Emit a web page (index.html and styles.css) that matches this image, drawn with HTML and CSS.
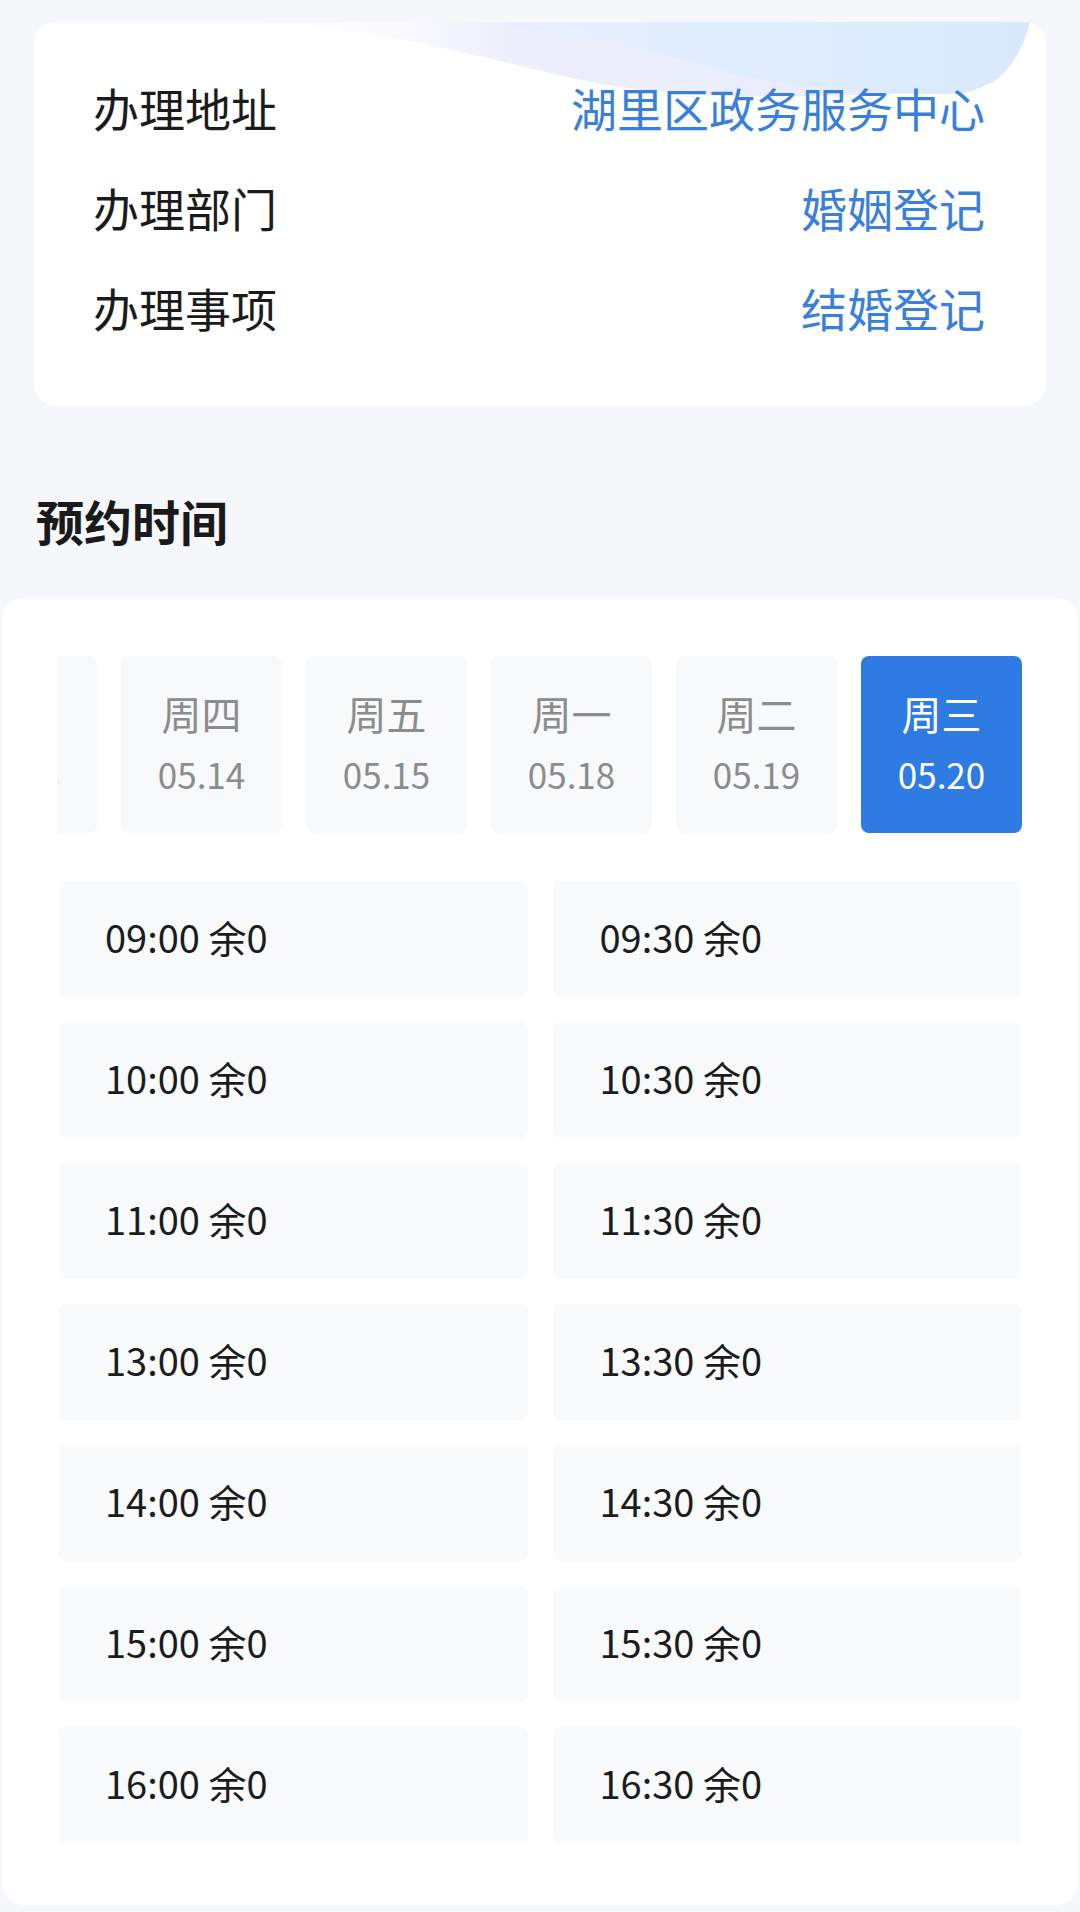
FILE: index.html
```html
<!DOCTYPE html>
<html lang="zh-CN">
<head>
<meta charset="utf-8">
<title>预约时间</title>
<link rel="stylesheet" href="styles.css">
</head>
<body>
<div class="page">
  <section class="info-card">
    <svg class="wave" viewBox="0 0 1012 384" preserveAspectRatio="none" aria-hidden="true">
      <defs>
        <linearGradient id="wg" x1="0" y1="0" x2="1" y2="0">
          <stop offset="0" stop-color="#ffffff" stop-opacity="0"/>
          <stop offset="0.35" stop-color="#eeeefc"/>
          <stop offset="1" stop-color="#e6eefc"/>
        </linearGradient>
        <linearGradient id="wg2" x1="0" y1="0" x2="1" y2="0">
          <stop offset="0" stop-color="#e4effd" stop-opacity="0"/>
          <stop offset="0.45" stop-color="#e0edfd"/>
          <stop offset="1" stop-color="#d9e9fc"/>
        </linearGradient>
      </defs>
      <path d="M200,0 C330,4 430,30 520,52 C610,74 700,76 780,74 C860,72 940,72 960,60 C980,45 990,25 996,0 Z" fill="url(#wg)"/>
      <path d="M396,0 C520,4 620,30 700,52 C770,68 850,72 920,72 C960,70 985,40 996,0 Z" fill="url(#wg2)"/>
    </svg>
    <div class="row"><span class="label">办理地址</span><span class="value">湖里区政务服务中心</span></div>
    <div class="row"><span class="label">办理部门</span><span class="value">婚姻登记</span></div>
    <div class="row"><span class="label">办理事项</span><span class="value">结婚登记</span></div>
  </section>

  <h2 class="section-title">预约时间</h2>

  <section class="time-card">
    <div class="dates">
      <div class="date"><span class="wd">周二</span><span class="md">05.12</span></div>
      <div class="date"><span class="wd">周三</span><span class="md">05.13</span></div>
      <div class="date"><span class="wd">周四</span><span class="md">05.14</span></div>
      <div class="date"><span class="wd">周五</span><span class="md">05.15</span></div>
      <div class="date"><span class="wd">周一</span><span class="md">05.18</span></div>
      <div class="date"><span class="wd">周二</span><span class="md">05.19</span></div>
      <div class="date active"><span class="wd">周三</span><span class="md">05.20</span></div>
    </div>
    <div class="slots">
      <div class="slot">09:00 余0</div>
      <div class="slot">09:30 余0</div>
      <div class="slot">10:00 余0</div>
      <div class="slot">10:30 余0</div>
      <div class="slot">11:00 余0</div>
      <div class="slot">11:30 余0</div>
      <div class="slot">13:00 余0</div>
      <div class="slot">13:30 余0</div>
      <div class="slot">14:00 余0</div>
      <div class="slot">14:30 余0</div>
      <div class="slot">15:00 余0</div>
      <div class="slot">15:30 余0</div>
      <div class="slot">16:00 余0</div>
      <div class="slot">16:30 余0</div>
    </div>
  </section>
</div>
</body>
</html>
```

FILE: styles.css
```css
* { box-sizing: border-box; }
html, body {
  margin: 0;
  padding: 0;
  background: #f5f7fa;
  font-family: "Noto Sans CJK SC", "Noto Sans", sans-serif;
}
.page {
  width: 1080px;
  padding-top: 22px;
}
.info-card {
  position: relative;
  margin: 0 34px;
  height: 384px;
  padding: 35px 61px 49px 59px;
  background: #ffffff;
  border-radius: 22px;
  overflow: hidden;
}
.wave {
  position: absolute;
  left: 0;
  top: 0;
  width: 100%;
  height: 100%;
  pointer-events: none;
}
.row {
  position: relative;
  height: 100px;
  display: flex;
  align-items: center;
  justify-content: space-between;
}
.label {
  font-size: 46px;
  color: #1b1b1b;
}
.value {
  font-size: 46px;
  color: #3a7fda;
}
.section-title {
  margin: 84px 0 0 36px;
  height: 60px;
  line-height: 60px;
  font-size: 48px;
  font-weight: 700;
  color: #1a1a1a;
}
.time-card {
  margin: 48px 2px 0;
  padding: 58px 56px 62px 56px;
  background: #ffffff;
  border-radius: 22px;
}
.dates {
  display: flex;
  justify-content: flex-end;
  gap: 24px;
  overflow: hidden;
}
.date {
  flex: 0 0 161px;
  height: 177px;
  padding-bottom: 5px;
  border-radius: 8px;
  background: #f7f9fb;
  display: flex;
  flex-direction: column;
  align-items: center;
  justify-content: center;
  gap: 15px;
  color: #8c8c8c;
}
.date .wd {
  font-size: 40px;
  line-height: 48px;
}
.date .md {
  font-size: 35px;
  line-height: 44px;
}
.date.active {
  background: #2f7be4;
  color: #ffffff;
}
.slots {
  margin-top: 48px;
  display: grid;
  grid-template-columns: 1fr 1fr;
  grid-auto-rows: 116px;
  gap: 25px;
}
.slot {
  display: flex;
  align-items: center;
  padding-left: 47px;
  padding-bottom: 5px;
  background: #f8fafc;
  border-radius: 8px;
  font-size: 38px;
  color: #1c1c1c;
}
```
